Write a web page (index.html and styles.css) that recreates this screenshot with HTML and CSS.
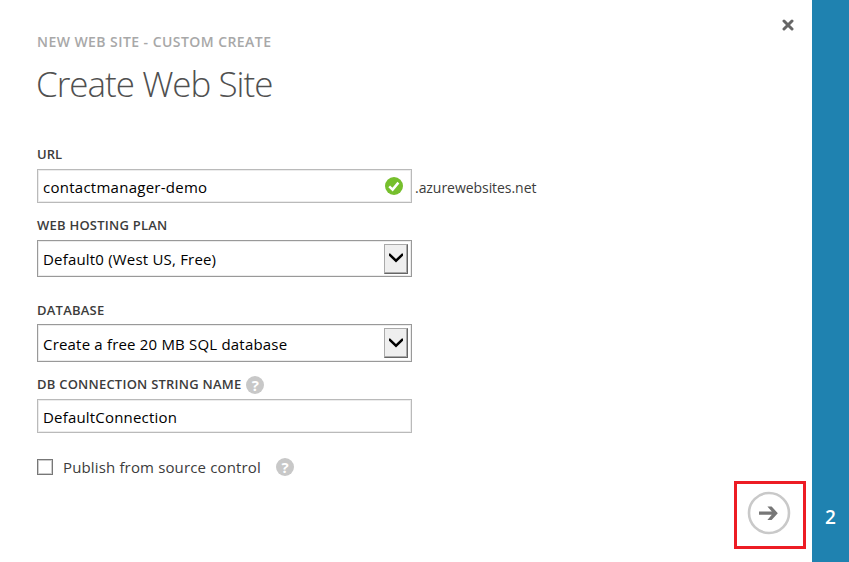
FILE: index.html
```html
<!DOCTYPE html>
<html lang="en">
<head>
<meta charset="utf-8">
<title>Create Web Site</title>
<link rel="stylesheet" href="styles.css">
</head>
<body>
<div class="wizard">
  <main class="panel">
    <form class="form">
      <p class="kicker"><span>NEW WEB SITE - CUSTOM CREATE</span></p>
      <h1 class="title"><span>Create Web Site</span></h1>

      <div class="label label-url"><span>URL</span></div>
      <div class="row">
        <div class="field field-url">
          <span class="v-url">contactmanager-demo</span>
          <svg class="check" viewBox="0 0 18 18"><circle cx="9" cy="9" r="9" fill="#76bf2d"/><path d="M4.2 9.4 7.6 12.6 13.4 5.6" fill="none" stroke="#fff" stroke-width="2.5"/></svg>
        </div>
        <span class="suffix">.azurewebsites.net</span>
      </div>

      <div class="label label-plan"><span>WEB HOSTING PLAN</span></div>
      <div class="field select select-plan">
        <span class="v-plan">Default0 (West US, Free)</span>
        <span class="drop"><svg viewBox="0 0 14 10"><path d="M0 .5H1.2L7 6 12.8 .5H14V2.8L7 9.6 0 2.8Z"/></svg></span>
      </div>

      <div class="label label-db"><span>DATABASE</span></div>
      <div class="field select select-db">
        <span class="v-db">Create a free 20 MB SQL database</span>
        <span class="drop"><svg viewBox="0 0 14 10"><path d="M0 .5H1.2L7 6 12.8 .5H14V2.8L7 9.6 0 2.8Z"/></svg></span>
      </div>

      <div class="label label-conn"><span>DB CONNECTION STRING NAME</span><i class="help">?</i></div>
      <div class="field field-conn"><span class="v-conn">DefaultConnection</span></div>

      <div class="publish"><span class="box"></span><span class="publish-text">Publish from source control</span><i class="help">?</i></div>
    </form>
    <div class="actions">
      <svg class="close" viewBox="0 0 12 12"><path d="M2 2 10 10M10 2 2 10" stroke="#666" stroke-width="3" stroke-linecap="round"/></svg>
      <div class="next">
        <svg viewBox="0 0 44 44"><circle cx="22" cy="22" r="20" fill="none" stroke="#c9c9c9" stroke-width="2.6"/><path d="M12 20.6H24.8L20.4 15.4H24.6L30.8 22.2 24.6 29H20.4L24.8 23.8H12Z" fill="#777"/></svg>
      </div>
    </div>
  </main>
  <aside class="steps"><span>2</span></aside>
</div>
</body>
</html>
```
FILE: styles.css
```css
* { box-sizing: border-box; }
body {
  margin: 0;
  background: #fff;
  color: #000;
  font-family: "Open Sans", "Noto Sans", sans-serif;
  font-size: 15px;
}
svg { display: block; flex: none; }
.wizard { display: flex; width: 849px; height: 562px; overflow: hidden; white-space: nowrap; }
.panel { display: flex; flex: 1; justify-content: space-between; padding: 0 6px 0 37px; }
.form { width: 520px; }
.kicker { margin: 32px 0 0; height: 20px; line-height: 20px; font-size: 14px; font-weight: 600; letter-spacing: 0.44px; color: #a8a8a8; }
.title { margin: 7px 0 0 -1px; height: 50px; line-height: 50px; font-size: 35px; font-weight: 300; letter-spacing: -1px; color: #505050; }
.label { display: flex; align-items: center; height: 20px; font-size: 13px; font-weight: 600; letter-spacing: 0.23px; color: #3c3c3c; }
.label-url { margin-top: 35px; letter-spacing: 0; }
.label-plan { margin-top: 12px; }
.label-db { margin-top: 23px; }
.label-conn { margin-top: 12px; }
.row { display: flex; align-items: center; margin-top: 5px; }
.field {
  display: flex;
  align-items: center;
  justify-content: space-between;
  width: 375px;
  height: 34px;
  padding: 2px 8px 0 5px;
  border: 1px solid #bababa;
  box-shadow: inset 0 0 0 1px #ececec;
  letter-spacing: 0.19px;
}
.v-url { letter-spacing: 0.26px; }
.check { width: 18px; height: 18px; margin-top: -3px; }
.suffix { margin: 2px 0 0 3px; font-size: 14px; letter-spacing: -0.05px; color: #3c3c3c; }
.select { height: 37px; padding: 0 3px 0 5px; border-color: #999; }
.select-plan { margin-top: 5px; }
.select-db { height: 38px; margin-top: 4px; }
.v-db { padding-top: 2px; }
.drop {
  display: flex;
  align-items: center;
  justify-content: center;
  width: 24px;
  height: 30px;
  background: #efefef;
  border: 1px solid #aaa;
  border-right-color: #666;
  border-bottom-color: #666;
  box-shadow: inset -1px -1px #aaa;
}
.drop svg { width: 14px; height: 10px; margin: -1px 1px 0 0; }
.field-conn { margin-top: 5px; }
.help {
  width: 18px;
  height: 18px;
  margin-left: 5px;
  border-radius: 50%;
  background: #c8c8c8;
  color: #fff;
  font-size: 15px;
  font-style: normal;
  font-weight: 700;
  letter-spacing: 0;
  line-height: 18px;
  text-align: center;
}
.label .help { margin-top: 2px; }
.publish { display: flex; align-items: center; height: 20px; margin-top: 24px; color: #3c3c3c; }
.box { width: 16px; height: 16px; border: 1px solid #777; box-shadow: inset 0 0 0 1px #ccc; }
.publish-text { width: 208px; margin-left: 10px; letter-spacing: 0.15px; }
.actions { display: flex; flex-direction: column; align-items: flex-end; justify-content: space-between; padding: 19px 0 13px; }
.close { width: 12px; height: 12px; margin-right: 12px; }
.next { display: flex; align-items: center; justify-content: center; width: 72px; height: 68px; padding: 0 2px 4px 0; border: 3px solid #ed1c24; }
.next svg { width: 44px; height: 44px; }
.steps { display: flex; align-items: flex-end; justify-content: center; width: 37px; padding-bottom: 32px; background: #1f82b0; color: #fff; font-size: 19px; font-weight: 600; line-height: 26px; }
```
